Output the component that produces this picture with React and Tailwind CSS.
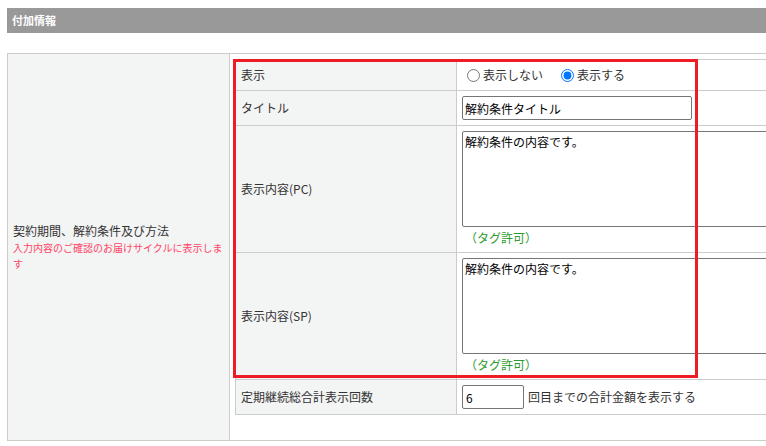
const FONT = { fontFamily: '"Noto Sans CJK JP", "Noto Sans", sans-serif' };

function Label({ children }) {
  return (
    <td className="w-[221px] border border-[#cccccc] bg-[#f3f4f4] px-[5px] align-middle text-[12px] text-[#333333]">
      {children}
    </td>
  );
}

function TagNote() {
  return <div className="h-[20px] pl-[3px] text-[12px] leading-[22px] text-[#2f9a2f]">（タグ許可）</div>;
}

export default function App() {
  return (
    <div className="relative h-[446px] w-[766px] overflow-hidden bg-white" style={FONT}>
      <div className="w-[1100px] pl-[7px] pt-[8px]">
        {/* section header */}
        <div className="flex h-[25px] items-center bg-[#999999] pl-[5px] text-[11px] font-bold text-white">
          付加情報
        </div>

        <table className="mt-[20px] w-full border-collapse">
          <tbody>
            <tr>
              <td className="w-[222px] border border-[#cccccc] bg-[#f3f4f4] pl-[5px] align-middle">
                <div className="text-[12px] leading-[18px] text-[#333333]">契約期間、解約条件及び方法</div>
                <div className="pr-[4px] text-[10px] leading-[16px] text-[#ff4466]">
                  入力内容のご確認のお届けサイクルに表示します
                </div>
              </td>
              <td className="border border-[#cccccc] px-[5px] pt-[5px] pb-[25px] align-top">
                <table className="w-full border-collapse">
                  <tbody>
                    <tr>
                      <Label>表示</Label>
                      <td className="border border-[#cccccc] p-[5px] text-[12px] text-[#333333]">
                        <div className="flex h-[20px] items-center">
                          <label className="flex items-center">
                            <input type="radio" name="disp" className="ml-[5px] mr-[3px] h-[13px] w-[13px]" />
                            表示しない
                          </label>
                          <label className="ml-[13px] flex items-center">
                            <input type="radio" name="disp" defaultChecked className="ml-[5px] mr-[3px] h-[13px] w-[13px]" />
                            表示する
                          </label>
                        </div>
                      </td>
                    </tr>
                    <tr>
                      <Label>タイトル</Label>
                      <td className="border border-[#cccccc] p-[5px]">
                        <input
                          type="text"
                          defaultValue="解約条件タイトル"
                          className="block h-[24px] w-[230px] rounded-[2px] border border-[#767676] px-[2px] text-[12px] text-black"
                        />
                      </td>
                    </tr>
                    <tr>
                      <Label>表示内容(PC)</Label>
                      <td className="border border-[#cccccc] p-[5px]">
                        <textarea
                          defaultValue="解約条件の内容です。"
                          className="block h-[96px] w-[420px] resize-none rounded-[2px] border border-[#767676] px-[2px] py-[1px] text-[12px] leading-[18px] text-black"
                        />
                        <TagNote />
                      </td>
                    </tr>
                    <tr>
                      <Label>表示内容(SP)</Label>
                      <td className="border border-[#cccccc] p-[5px]">
                        <textarea
                          defaultValue="解約条件の内容です。"
                          className="block h-[96px] w-[420px] resize-none rounded-[2px] border border-[#767676] px-[2px] py-[1px] text-[12px] leading-[18px] text-black"
                        />
                        <TagNote />
                      </td>
                    </tr>
                    <tr>
                      <Label>定期継続総合計表示回数</Label>
                      <td className="border border-[#cccccc] p-[5px]">
                        <div className="flex items-center text-[12px] text-[#333333]">
                          <input
                            type="text"
                            defaultValue="6"
                            className="block h-[24px] w-[62px] rounded-[2px] border border-[#767676] px-[3px] text-[12px] text-black"
                          />
                          <span className="ml-[4px]">回目までの合計金額を表示する</span>
                        </div>
                      </td>
                    </tr>
                  </tbody>
                </table>
              </td>
            </tr>
          </tbody>
        </table>
      </div>

      {/* red highlight annotation */}
      <div className="pointer-events-none absolute left-[233px] top-[59px] h-[319px] w-[465px] border-[3px] border-[#ee1c25]" />
    </div>
  );
}
